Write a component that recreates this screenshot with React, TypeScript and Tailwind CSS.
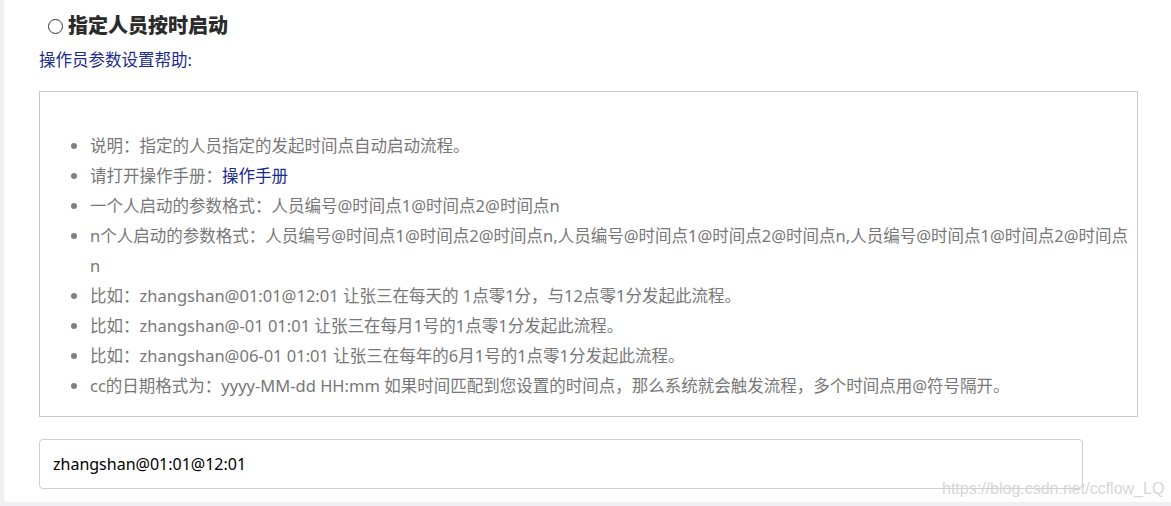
import React from "react";

const items: React.ReactNode[] = [
  "说明：指定的人员指定的发起时间点自动启动流程。",
  <>
    请打开操作手册：<a className="text-[#1c2b8f]">操作手册</a>
  </>,
  "一个人启动的参数格式：人员编号@时间点1@时间点2@时间点n",
  "n个人启动的参数格式：人员编号@时间点1@时间点2@时间点n,人员编号@时间点1@时间点2@时间点n,人员编号@时间点1@时间点2@时间点n",
  "比如：zhangshan@01:01@12:01 让张三在每天的 1点零1分，与12点零1分发起此流程。",
  "比如：zhangshan@-01 01:01 让张三在每月1号的1点零1分发起此流程。",
  "比如：zhangshan@06-01 01:01 让张三在每年的6月1号的1点零1分发起此流程。",
  "cc的日期格式为：yyyy-MM-dd HH:mm 如果时间匹配到您设置的时间点，那么系统就会触发流程，多个时间点用@符号隔开。",
];

export default function App() {
  return (
    <div
      className="relative w-[1171px] h-[506px] bg-[#f0f0f2] pl-1 pb-1 overflow-hidden"
      style={{ fontFamily: '"Noto Sans", "Noto Sans CJK SC", sans-serif' }}
    >
      <div className="h-full bg-white rounded-bl-[4px] pl-[35px] pt-[12px]">
        <h2 className="text-[20px] leading-[28px] font-extrabold text-[#2b2b2b] pl-[9px] flex items-center">
          <span className="inline-block w-[15px] h-[15px] rounded-full border-[1.5px] border-[#333] mr-[5px]"></span>
          指定人员按时启动
        </h2>
        <div className="mt-[8px] text-[16.5px] leading-[24px] text-[#1c2b8f]">操作员参数设置帮助:</div>
        <div className="mt-[19px] w-[1099px] border border-[#c8c8c8] pt-[39px] pb-[15px] pr-[2px]">
          <ul className="list-disc pl-[50px] text-[16.5px] leading-[30px] text-[#777] marker:text-[#808080]">
            {items.map((it, i) => (
              <li key={i}>{it}</li>
            ))}
          </ul>
        </div>
        <div className="mt-[22px] w-[1044px] h-[50px] border border-[#cfcfcf] rounded-[4px] flex items-center pl-[13px] text-[16px] text-black">
          zhangshan@01:01@12:01
        </div>
      </div>
      <div
        className="absolute left-[942px] top-[477px] text-[16px] text-[#d6d6d6]"
        style={{ fontFamily: '"Liberation Sans", sans-serif' }}
      >
        https://blog.csdn.net/ccflow_LQ
      </div>
    </div>
  );
}
